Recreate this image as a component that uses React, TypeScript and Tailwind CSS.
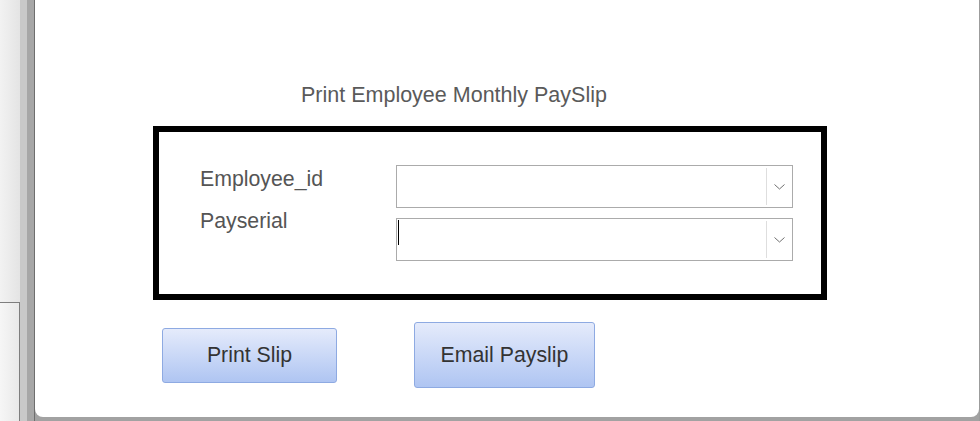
const font = { fontFamily: '"Liberation Sans", Arial, sans-serif' }

function ComboBox({ caret = false }: { caret?: boolean }) {
  return (
    <div className="flex h-[43px] w-[397px] items-stretch border border-[#ababab] bg-white">
      <div className="flex flex-1 items-start pl-px pt-px">
        {caret && <div className="h-[25px] w-px bg-black" />}
      </div>
      <div className="my-[2px] w-px bg-[#dedede]" />
      <div className="flex w-[25px] items-center justify-center">
        <svg width="11" height="6" viewBox="0 0 11 6" fill="none">
          <polyline points="0.5,0.5 5.5,5 10.5,0.5" stroke="#6f6f6f" strokeWidth="1" />
        </svg>
      </div>
    </div>
  )
}

function Button({ label, size }: { label: string; size: "sm" | "lg" }) {
  return (
    <button
      className={`rounded-[3px] border border-[#8eaae2] bg-gradient-to-b from-[#e5ebfb] to-[#afc5f2] text-[21.3px] leading-[24px] text-[#333333] ${
        size === "sm" ? "h-[55px] w-[175px]" : "h-[66px] w-[181px]"
      }`}
      style={font}
    >
      {label}
    </button>
  )
}

export default function App() {
  return (
    <div className="flex h-[421px] w-[980px] overflow-hidden bg-[#a2a2a2]" style={font}>
      {/* side frame */}
      <div className="flex w-[20px] flex-col">
        <div className="flex-1 bg-gradient-to-r from-[#f2f2f2] to-[#e4e4e4]" />
        <div className="h-[119px] border-r border-t border-[#7e7e7e] bg-gradient-to-r from-[#f6f6f6] to-[#e9e9e9]" />
      </div>
      <div className="w-[7px] bg-[#c9c9c9]" />
      <div className="w-[7px] bg-[#a7a7a7]" />
      <div className="w-px bg-[#6e6e6e]" />

      {/* main panel */}
      <div className="flex w-[944px] flex-col">
        <div className="h-[417px] rounded-b-[8px] bg-white">
          <div className="ml-[266px] pt-[83px] text-[21.5px] leading-[24px] text-[#5a5a5a]">
            Print Employee Monthly PaySlip
          </div>

          <div className="ml-[118px] mt-[19px] flex h-[174px] w-[674px] border-[6px] border-black">
            <div className="flex w-[237px] flex-col gap-[18px] pl-[41px] pt-[35px] text-[21.3px] leading-[24px] text-[#555555]">
              <span>Employee_id</span>
              <span>Payserial</span>
            </div>
            <div className="flex flex-col gap-[10px] pt-[33px]">
              <ComboBox />
              <ComboBox caret />
            </div>
          </div>

          <div className="ml-[127px] mt-[22px] flex items-center gap-[77px]">
            <Button label="Print Slip" size="sm" />
            <Button label="Email Payslip" size="lg" />
          </div>
        </div>
      </div>
      <div className="w-px bg-[#9c9c9c]" />
    </div>
  )
}
